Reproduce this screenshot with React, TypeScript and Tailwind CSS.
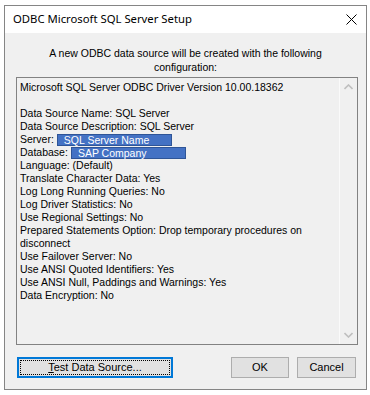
import React from "react";

function Row({ children }: { children?: React.ReactNode }) {
  return <div className="h-[13px] flex items-center whitespace-nowrap">{children}</div>;
}

function Hl({ children }: { children: React.ReactNode }) {
  return (
    <span className="ml-[3px] inline-flex items-center h-[12px] leading-[12px] w-[115px] bg-[#4472c4] border border-[#2f5597] text-white pl-[6px] text-[10.5px] font-medium">
      {children}
    </span>
  );
}

export default function App() {
  return (
    <div
      className="w-[370px] h-[395px] bg-white pt-[5px] pl-[4px] text-black"
      style={{ fontFamily: '"Liberation Sans", Arial, sans-serif' }}
    >
      <div className="w-[363px] h-[385px] border border-[#858585] bg-[#f0f0f0] flex flex-col">
        <div className="h-[27px] bg-white flex items-center pl-[8px] shrink-0">
          <span
            className="text-[11.3px]"
            style={{ fontFamily: '"Noto Sans", "Open Sans", sans-serif' }}
          >
            ODBC Microsoft SQL Server Setup
          </span>
          <svg className="ml-auto mr-[9px]" width="11" height="11" viewBox="0 0 11 11">
            <path d="M0.5 0.5 L10.5 10.5 M10.5 0.5 L0.5 10.5" stroke="#000" strokeWidth="1" />
          </svg>
        </div>
        <div className="flex-1 flex flex-col">
          <div className="pt-[13px] text-center text-[10.5px] leading-[14px]">
            A new ODBC data source will be created with the following
            <br />
            configuration:
          </div>
          <div className="mt-[3px] ml-[11px] w-[342px] h-[268px] border border-[#828282] flex">
            <div className="flex-1 pl-[3px] pt-[3px] text-[10.5px]">
              <Row>Microsoft SQL Server ODBC Driver Version 10.00.18362</Row>
              <Row />
              <Row>Data Source Name: SQL Server</Row>
              <Row>Data Source Description: SQL Server</Row>
              <Row>
                Server:<Hl>SQL Server Name</Hl>
              </Row>
              <Row>
                Database:<Hl>SAP Company</Hl>
              </Row>
              <Row>Language: (Default)</Row>
              <Row>Translate Character Data: Yes</Row>
              <Row>Log Long Running Queries: No</Row>
              <Row>Log Driver Statistics: No</Row>
              <Row>Use Regional Settings: No</Row>
              <Row>Prepared Statements Option: Drop temporary procedures on</Row>
              <Row>disconnect</Row>
              <Row>Use Failover Server: No</Row>
              <Row>Use ANSI Quoted Identifiers: Yes</Row>
              <Row>Use ANSI Null, Paddings and Warnings: Yes</Row>
              <Row>Data Encryption: No</Row>
            </div>
            <div className="w-[18px] border-l border-[#fafafa] flex flex-col justify-between">
              <div className="h-[17px] flex items-center justify-center">
                <svg width="9" height="6" viewBox="0 0 9 6">
                  <path d="M0.5 5 L4.5 1 L8.5 5" fill="none" stroke="#bfbfbf" strokeWidth="1.6" />
                </svg>
              </div>
              <div className="h-[17px] flex items-center justify-center mb-[1px]">
                <svg width="9" height="6" viewBox="0 0 9 6">
                  <path d="M0.5 1 L4.5 5 L8.5 1" fill="none" stroke="#bfbfbf" strokeWidth="1.6" />
                </svg>
              </div>
            </div>
          </div>
          <div className="mt-[12px] flex text-[11px]">
            <button className="ml-[12px] w-[156px] h-[21px] bg-[#e1e1e1] border-2 border-[#0078d7] outline-1 outline-dotted outline-black outline-offset-[-4px] flex items-center justify-center">
              <span>
                <span className="underline">T</span>est Data Source...
              </span>
            </button>
            <button className="ml-auto w-[58px] h-[21px] bg-[#e1e1e1] border border-[#adadad] flex items-center justify-center">
              OK
            </button>
            <button className="ml-[8px] mr-[10px] w-[59px] h-[21px] bg-[#e1e1e1] border border-[#adadad] flex items-center justify-center">
              Cancel
            </button>
          </div>
        </div>
      </div>
    </div>
  );
}
